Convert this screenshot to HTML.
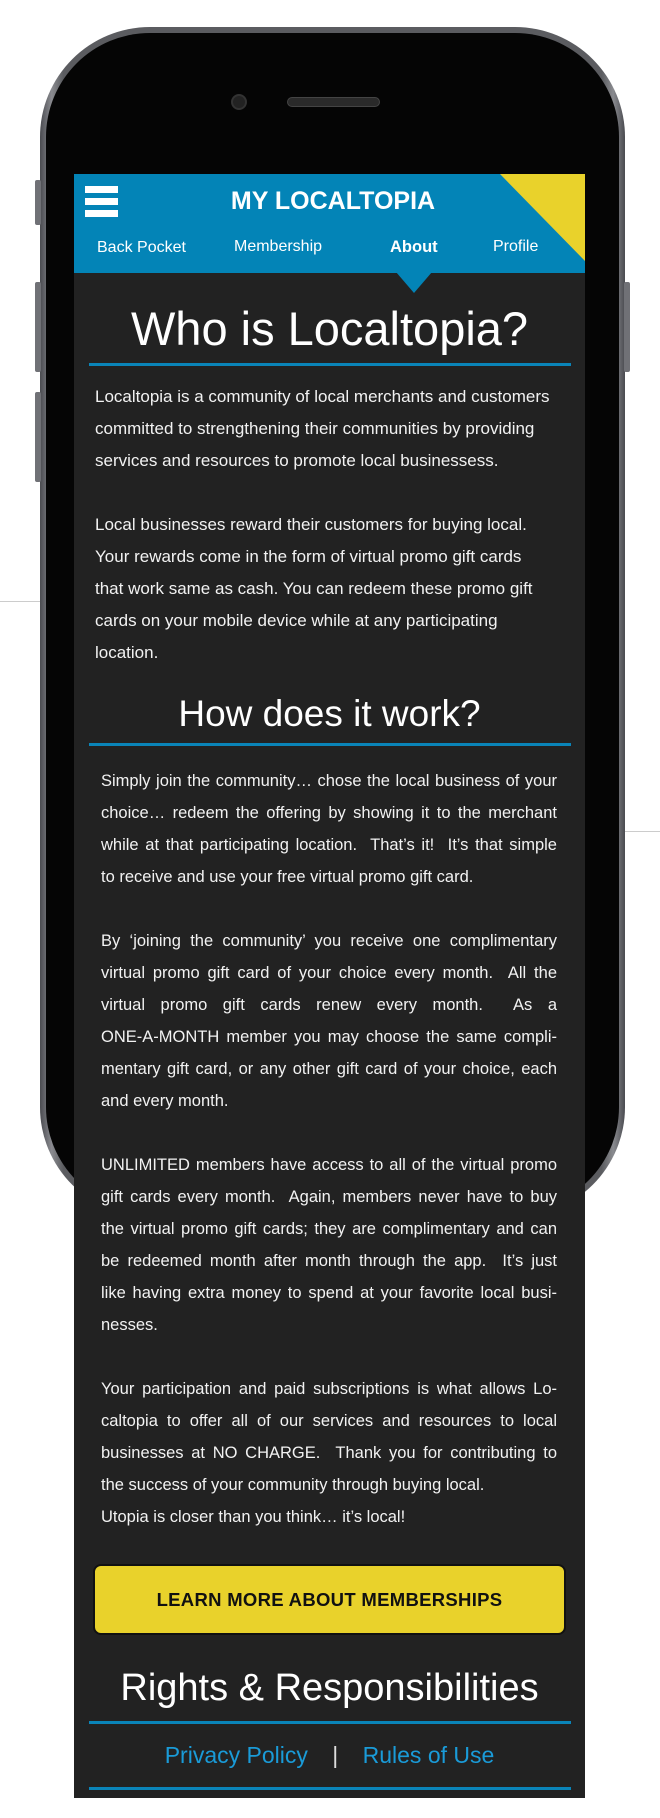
<!DOCTYPE html>
<html><head><meta charset="utf-8"><style>
*{margin:0;padding:0;box-sizing:border-box}
html,body{width:660px;height:1818px;background:#fff;overflow:hidden;font-family:"Liberation Sans",sans-serif}
.abs{position:absolute}
.phone{left:40px;top:27px;width:585px;height:1190px;border-radius:110px;background:linear-gradient(90deg,#4a4b50,#8a8b90 2%,#5b5c60 4%,#5b5c60 96%,#8a8b90 98%,#4a4b50)}
.bez{left:46px;top:33px;width:573px;height:1178px;border-radius:104px;background:#050505}
.btn{background:#707176;border-radius:2px}
.screen{left:74px;top:174px;width:511px;height:1624px;background:#222}
.hdr{left:74px;top:174px;width:511px;height:99px;background:#0384b7;overflow:hidden}
.t{color:#fff;white-space:nowrap}
.ln{position:absolute;left:101px;width:456px;height:32px;line-height:32px;font-size:16.5px;color:#f2f2f2;white-space:nowrap}
.j{text-align:justify;text-align-last:justify}
.l1{left:95px;font-size:17px}
.rule{height:3px;background:#0a84b8;left:89px;width:482px}
</style></head><body>
<div class="abs phone"></div>
<div class="abs bez"></div>
<div class="abs btn" style="left:35px;top:180px;width:6px;height:45px"></div>
<div class="abs btn" style="left:35px;top:282px;width:6px;height:90px"></div>
<div class="abs btn" style="left:35px;top:392px;width:6px;height:90px"></div>
<div class="abs btn" style="left:624px;top:282px;width:6px;height:90px"></div>
<div class="abs" style="left:0;top:601px;width:40px;height:1px;background:#ccc"></div>
<div class="abs" style="left:625px;top:831px;width:35px;height:1px;background:#ccc"></div>
<div class="abs" style="left:231px;top:94px;width:16px;height:16px;border-radius:50%;background:#222;border:2px solid #333"></div>
<div class="abs" style="left:287px;top:97px;width:93px;height:10px;border-radius:5px;background:#2a2a2a;border:1px solid #444"></div>
<div class="abs screen"></div>
<div class="abs hdr">
 <svg class="abs" style="left:0;top:0" width="511" height="99"><polygon points="426,0 511,0 511,87" fill="#e9d22b"/></svg>
 <div class="abs" style="left:11px;top:12px;width:33px;height:7px;background:#fff"></div>
 <div class="abs" style="left:11px;top:24px;width:33px;height:7px;background:#fff"></div>
 <div class="abs" style="left:11px;top:36px;width:33px;height:7px;background:#fff"></div>
 <div class="abs t" style="left:0;width:517px;text-align:center;top:11px;font-size:25px;font-weight:bold;line-height:32px;padding-left:1px">MY LOCALTOPIA</div>
 <div class="abs t" style="left:23px;top:63px;font-size:16px;line-height:22px">Back Pocket</div>
 <div class="abs t" style="left:160px;top:62px;font-size:16px;line-height:22px">Membership</div>
 <div class="abs t" style="left:316px;top:62px;font-size:16.5px;line-height:22px;font-weight:bold">About</div>
 <div class="abs t" style="left:419px;top:62px;font-size:16px;line-height:22px">Profile</div>
</div>
<svg class="abs" style="left:396px;top:272px" width="36" height="22"><polygon points="0,0 36,0 18,21" fill="#0384b7"/></svg>

<div class="abs t" style="left:74px;width:511px;text-align:center;top:301px;font-size:47px;line-height:56px">Who is Localtopia?</div>
<div class="abs rule" style="top:363px"></div>
<div class="ln l1" style="top:381px">Localtopia is a community of local merchants and customers</div>
<div class="ln l1" style="top:413px">committed to strengthening their communities by providing</div>
<div class="ln l1" style="top:445px">services and resources to promote local businessess.</div>
<div class="ln l1" style="top:509px">Local businesses reward their customers for buying local.</div>
<div class="ln l1" style="top:541px">Your rewards come in the form of virtual promo gift cards</div>
<div class="ln l1" style="top:573px">that work same as cash. You can redeem these promo gift</div>
<div class="ln l1" style="top:605px">cards on your mobile device while at any participating</div>
<div class="ln l1" style="top:637px">location.</div>

<div class="abs t" style="left:74px;width:511px;text-align:center;top:692px;font-size:37px;line-height:44px">How does it work?</div>
<div class="abs rule" style="top:743px"></div>
<div class="ln j" style="top:765px">Simply join the community… chose the local business of your</div>
<div class="ln j" style="top:797px">choice… redeem the offering by showing it to the merchant</div>
<div class="ln j" style="top:829px">while at that participating location.&nbsp; That’s it!&nbsp; It’s that simple</div>
<div class="ln" style="top:861px">to receive and use your free virtual promo gift card.</div>
<div class="ln j" style="top:925px">By ‘joining the community’ you receive one complimentary</div>
<div class="ln j" style="top:957px">virtual promo gift card of your choice every month.&nbsp; All the</div>
<div class="ln j" style="top:989px">virtual promo gift cards renew every month.&nbsp; As a</div>
<div class="ln j" style="top:1021px">ONE-A-MONTH member you may choose the same compli-</div>
<div class="ln j" style="top:1053px">mentary gift card, or any other gift card of your choice, each</div>
<div class="ln" style="top:1085px">and every month.</div>
<div class="ln j" style="top:1149px">UNLIMITED members have access to all of the virtual promo</div>
<div class="ln j" style="top:1181px">gift cards every month.&nbsp; Again, members never have to buy</div>
<div class="ln j" style="top:1213px">the virtual promo gift cards; they are complimentary and can</div>
<div class="ln j" style="top:1245px">be redeemed month after month through the app.&nbsp; It’s just</div>
<div class="ln j" style="top:1277px">like having extra money to spend at your favorite local busi-</div>
<div class="ln" style="top:1309px">nesses.</div>
<div class="ln j" style="top:1373px">Your participation and paid subscriptions is what allows Lo-</div>
<div class="ln j" style="top:1405px">caltopia to offer all of our services and resources to local</div>
<div class="ln j" style="top:1437px">businesses at NO CHARGE.&nbsp; Thank you for contributing to</div>
<div class="ln" style="top:1469px">the success of your community through buying local.</div>
<div class="ln" style="top:1501px">Utopia is closer than you think… it’s local!</div>

<div class="abs" style="left:93px;top:1564px;width:473px;height:71px;background:#e9d22b;border:2px solid #111;border-radius:8px;text-align:center;line-height:67px;font-size:18.5px;font-weight:bold;color:#111;letter-spacing:0.3px">LEARN MORE ABOUT MEMBERSHIPS</div>

<div class="abs t" style="left:74px;width:511px;text-align:center;top:1664px;font-size:38px;line-height:48px">Rights &amp; Responsibilities</div>
<div class="abs rule" style="top:1721px"></div>
<div class="abs" style="left:74px;width:511px;text-align:center;top:1740px;font-size:23px;line-height:30px;color:#1a9bd8;white-space:nowrap">Privacy Policy <span style="color:#ddd;margin:0 18px">|</span> Rules of Use</div>
<div class="abs rule" style="top:1787px"></div>
</body></html>
